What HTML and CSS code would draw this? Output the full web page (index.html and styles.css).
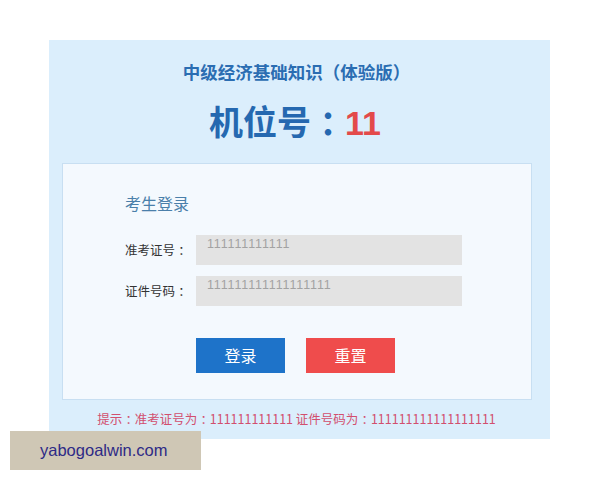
FILE: index.html
```html
<!DOCTYPE html>
<html lang="zh">
<head>
<meta charset="utf-8">
<link rel="stylesheet" href="styles.css">
</head>
<body>
<div class="panel">
  <div class="title">中级经济基础知识<span class="p">（</span>体验版<span class="p">）</span></div>
  <div class="seat">机位号<span class="c">：</span><span class="num">11</span></div>
  <div class="card">
    <div class="card-title">考生登录</div>
    <div class="row">
      <span class="label">准考证号<span class="c">：</span></span>
      <div class="input">111111111111</div>
    </div>
    <div class="row row2">
      <span class="label">证件号码<span class="c">：</span></span>
      <div class="input">111111111111111111</div>
    </div>
    <div class="buttons">
      <div class="btn btn-login">登录</div>
      <div class="btn btn-reset">重置</div>
    </div>
  </div>
  <div class="hint">提示<span class="c">：</span>准考证号为<span class="c">：</span>111111111111 证件号码为<span class="c">：</span>111111111111111111</div>
</div>
<div class="watermark">yabogoalwin.com</div>
</body>
</html>
```
FILE: styles.css
```css
html, body {
  margin: 0;
  padding: 0;
  background: #ffffff;
}
body {
  position: relative;
  width: 600px;
  height: 480px;
  overflow: hidden;
  font-family: "Noto Sans CJK SC", "Liberation Sans", sans-serif;
}
.p {
  font-family: "Noto Sans CJK TC", "Noto Sans CJK SC", sans-serif;
}
.c {
  padding-left: 0.25em;
  letter-spacing: -0.25em;
}
.panel {
  margin: 40px 0 0 49px;
  width: 501px;
  height: 399px;
  background: #dbeefc;
  box-sizing: border-box;
  padding-top: 20px;
}
.title {
  text-align: center;
  font-size: 17.5px;
  font-weight: bold;
  color: #2b6db2;
  line-height: 24px;
  height: 24px;
  margin-left: -6px;
}
.seat {
  margin-top: 17px;
  height: 40px;
  line-height: 40px;
  text-align: center;
  font-size: 34px;
  font-weight: bold;
  color: #2568b0;
  margin-left: -9px;
}
.seat .num {
  color: #e34a4a;
  font-family: "Liberation Sans", "Noto Sans CJK SC", sans-serif;
}
.card {
  margin: 22px 0 0 13px;
  width: 470px;
  height: 237px;
  box-sizing: border-box;
  background: #f4f9fe;
  border: 1px solid #c8dff2;
  padding: 28px 0 0 62px;
}
.card-title {
  font-size: 16px;
  line-height: 22px;
  color: #4a7faa;
}
.row {
  display: flex;
  align-items: center;
  margin-top: 21px;
  height: 30px;
}
.row2 {
  margin-top: 11px;
}
.label {
  width: 71px;
  font-size: 12.5px;
  color: #333333;
  line-height: 30px;
}
.input {
  width: 266px;
  height: 30px;
  box-sizing: border-box;
  background: #e3e3e3;
  padding: 2px 0 0 11px;
  font-family: "Liberation Sans", sans-serif;
  font-size: 12.5px;
  letter-spacing: 0.85px;
  line-height: 14px;
  color: #a2a2a2;
}
.buttons {
  display: flex;
  gap: 21px;
  margin: 32px 0 0 71px;
}
.btn {
  width: 89px;
  height: 35px;
  line-height: 35px;
  text-align: center;
  color: #ffffff;
  font-size: 16px;
}
.btn-login {
  background: #1e73c9;
}
.btn-reset {
  background: #ef4c4c;
}
.hint {
  margin-top: 10px;
  text-align: center;
  font-size: 12.5px;
  line-height: 18px;
  color: #d24f6e;
  margin-left: -6px;
}
.watermark {
  position: absolute;
  left: 10px;
  top: 431px;
  width: 191px;
  height: 39px;
  background: #cfc7b5;
  color: #2e2a86;
  font-family: "Liberation Sans", sans-serif;
  font-size: 16.5px;
  line-height: 39px;
  box-sizing: border-box;
  padding-left: 30px;
}
```
